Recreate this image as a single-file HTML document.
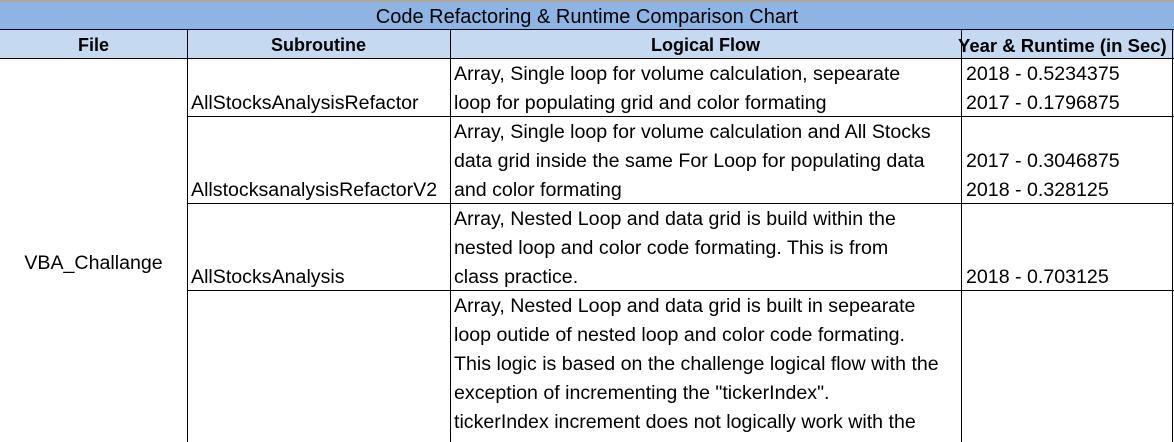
<!DOCTYPE html>
<html><head><style>
body{margin:0;width:1174px;height:442px;overflow:hidden;background:#fff;position:relative;font-family:"Liberation Sans",Arial,sans-serif;color:#000}
.a{position:absolute}
.t{position:absolute;font-size:19.6px;line-height:29px;white-space:nowrap;margin-top:1px}
.h{font-weight:bold;font-size:18px}
.v{position:absolute;width:1px;background:#000}
.hr{position:absolute;height:1px;background:#000}
</style></head><body>
<div class="a" style="left:0;top:0;width:1174px;height:2px;background:#a6a6a6"></div>
<div class="a" style="left:0;top:2px;width:1174px;height:27px;background:#8eb4e3"></div>
<div class="a" style="left:0;top:30px;width:1174px;height:28px;background:#c5d9f1"></div>
<div class="t" style="left:0;width:1174px;top:2px;text-align:center;font-size:20px;line-height:28px">Code Refactoring &amp; Runtime Comparison Chart</div>
<div class="hr" style="left:0;top:29px;width:1174px"></div>
<div class="hr" style="left:0;top:58px;width:1174px"></div>
<div class="hr" style="left:187px;top:116px;width:987px"></div>
<div class="hr" style="left:187px;top:203px;width:987px"></div>
<div class="hr" style="left:187px;top:290px;width:987px"></div>
<div class="v" style="left:187px;top:29px;height:413px"></div>
<div class="v" style="left:450px;top:29px;height:413px"></div>
<div class="v" style="left:961px;top:29px;height:413px"></div>
<div class="v" style="left:1172px;top:29px;height:413px"></div>
<div class="t h" style="left:0;width:187px;top:30px;text-align:center">File</div>
<div class="t h" style="left:187px;width:263px;top:30px;text-align:center">Subroutine</div>
<div class="t h" style="left:450px;width:511px;top:30px;text-align:center">Logical Flow</div>
<div class="t h" style="left:958px;top:30px;font-size:18.5px;width:214px;overflow:hidden">Year &amp; Runtime (in Sec)</div>
<div class="t" style="left:0;width:187px;top:248px;text-align:center">VBA_Challange</div>
<div class="t" style="left:191px;top:88px">AllStocksAnalysisRefactor</div>
<div class="t" style="left:191px;top:175px">AllstocksanalysisRefactorV2</div>
<div class="t" style="left:191px;top:262px">AllStocksAnalysis</div>
<div class="t" style="left:454px;top:59px">Array, Single loop for volume calculation, sepearate</div>
<div class="t" style="left:454px;top:88px">loop for populating grid and color formating</div>
<div class="t" style="left:454px;top:117px">Array, Single loop for volume calculation and All Stocks</div>
<div class="t" style="left:454px;top:146px">data grid inside the same For Loop for populating data</div>
<div class="t" style="left:454px;top:175px">and color formating</div>
<div class="t" style="left:454px;top:204px">Array, Nested Loop and data grid is build within the</div>
<div class="t" style="left:454px;top:233px">nested loop and color code formating. This is from</div>
<div class="t" style="left:454px;top:262px">class practice.</div>
<div class="t" style="left:454px;top:291px">Array, Nested Loop and data grid is built in sepearate</div>
<div class="t" style="left:454px;top:320px">loop outide of nested loop and color code formating.</div>
<div class="t" style="left:454px;top:349px">This logic is based on the challenge logical flow with the</div>
<div class="t" style="left:454px;top:378px">exception of incrementing the "tickerIndex".</div>
<div class="t" style="left:454px;top:407px">tickerIndex increment does not logically work with the</div>
<div class="t" style="left:966px;top:59px">2018 - 0.5234375</div>
<div class="t" style="left:966px;top:88px">2017 - 0.1796875</div>
<div class="t" style="left:966px;top:146px">2017 - 0.3046875</div>
<div class="t" style="left:966px;top:175px">2018 - 0.328125</div>
<div class="t" style="left:966px;top:262px">2018 - 0.703125</div>
</body></html>
